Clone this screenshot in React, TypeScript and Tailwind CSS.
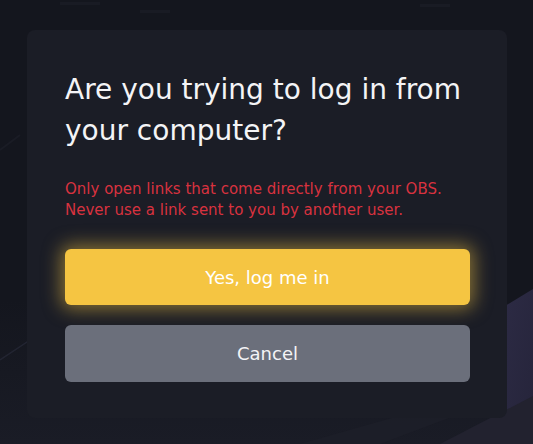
export default function App() {
  return (
    <div
      className="relative w-[533px] h-[444px] overflow-hidden bg-[#14161e] pt-[30px] pl-[27px]"
      style={{ fontFamily: '"DejaVu Sans", sans-serif' }}
    >
      <svg
        className="absolute inset-0 pointer-events-none"
        width="533"
        height="444"
        viewBox="0 0 533 444"
      >
        <defs>
          <linearGradient id="bottomFade" x1="0" y1="0" x2="0" y2="1">
            <stop offset="0" stopColor="#14161e" />
            <stop offset="1" stopColor="#1a1c26" />
          </linearGradient>
          <linearGradient id="purple" x1="0" y1="0" x2="1" y2="1">
            <stop offset="0" stopColor="#2d2b45" />
            <stop offset="1" stopColor="#25243a" />
          </linearGradient>
        </defs>
        <rect x="0" y="300" width="533" height="144" fill="url(#bottomFade)" />
        <polygon points="500,309 533,289 533,444 500,444" fill="url(#purple)" />
        <polygon points="440,444 533,396 533,444" fill="#22222f" />
        <polygon points="300,444 420,410 470,410 380,444" fill="#1e1f2a" opacity="0.7" />
        <line x1="0" y1="360" x2="30" y2="340" stroke="#232532" strokeWidth="1.5" />
        <line x1="0" y1="150" x2="20" y2="135" stroke="#1a1c25" strokeWidth="2" />
        <rect x="60" y="2" width="40" height="3" fill="#191b24" />
        <rect x="140" y="10" width="30" height="3" fill="#191b24" />
        <rect x="420" y="4" width="30" height="3" fill="#191b24" />
      </svg>

      <div className="relative flex flex-col w-[480px] h-[388px] rounded-[8px] bg-[#1b1d26] pt-[39px] pl-[38px] pr-[37px] pb-[36px]">
        <h1 className="text-[28px] leading-[41px] font-normal text-[#f4f4f6]">
          Are you trying to log in from
          <br />
          your computer?
        </h1>
        <p className="mt-[28px] text-[15px] leading-[21px] text-[#d8323f]">
          Only open links that come directly from your OBS.
          <br />
          Never use a link sent to you by another user.
        </p>
        <button className="mt-[28px] h-[56px] w-full rounded-[6px] bg-[#f5c542] text-[18px] text-white shadow-[0_0_18px_4px_rgba(245,197,66,0.5)] flex items-center justify-center">
          Yes, log me in
        </button>
        <button className="mt-[20px] h-[57px] w-full rounded-[6px] bg-[#6b6f7b] text-[18px] text-[#f4f4f6] flex items-center justify-center">
          Cancel
        </button>
      </div>
    </div>
  );
}
